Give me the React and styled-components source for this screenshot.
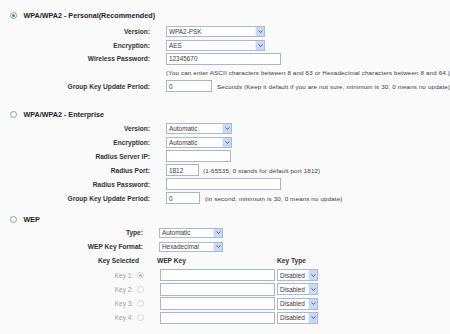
import React from 'react';
import styled, { createGlobalStyle } from 'styled-components';

const GlobalStyle = createGlobalStyle`
  html, body {
    margin: 0;
    padding: 0;
    background: #fafafa;
  }
  body {
    font-family: "Liberation Sans", Arial, sans-serif;
  }
`;

const Page = styled.div`
  width: 450px;
  height: 334px;
  overflow: hidden;
  box-sizing: border-box;
  padding: 8px 0 0 10px;
  color: #333;
`;

const Section = styled.div`
  margin-top: ${({ $top }) => $top || 0}px;
`;

const Title = styled.div`
  display: flex;
  align-items: center;
  gap: 6.5px;
  height: ${({ $h }) => $h || 14}px;
  font-size: 7.2px;
  font-weight: bold;
  color: #222;
  white-space: nowrap;
`;

const Radio = styled.span`
  width: 7px;
  height: 7px;
  box-sizing: border-box;
  border-radius: 50%;
  border: 1px solid ${({ $disabled }) => ($disabled ? '#cdd3db' : '#8d9db3')};
  background: #fff;
  display: inline-flex;
  align-items: center;
  justify-content: center;
  flex-shrink: 0;

  &::after {
    content: '';
    width: 3px;
    height: 3px;
    border-radius: 50%;
    background: ${({ $disabled }) => ($disabled ? '#b8b8b8' : '#3f9a55')};
    display: ${({ $checked }) => ($checked ? 'block' : 'none')};
  }
`;

const Rows = styled.div`
  margin-top: ${({ $top }) => $top || 0}px;
`;

const Row = styled.div`
  display: flex;
  align-items: center;
  height: ${({ $h }) => $h || 14}px;
`;

const Label = styled.div`
  width: ${({ $w }) => $w}px;
  flex-shrink: 0;
  box-sizing: border-box;
  padding-right: ${({ $pad }) => $pad || 0}px;
  margin-right: ${({ $gap }) => ($gap === undefined ? 16 : $gap)}px;
  text-align: right;
  font-size: 6.6px;
  font-weight: bold;
  color: #333;
  white-space: nowrap;
`;

const KeyLabel = styled.div`
  width: ${({ $w }) => $w}px;
  flex-shrink: 0;
  margin-right: 16px;
  display: flex;
  align-items: center;
  justify-content: flex-end;
  gap: 4px;
  font-size: 6.4px;
  color: #9d9d9d;
  white-space: nowrap;
`;

const HeadCell = styled.div`
  width: ${({ $w }) => ($w ? `${$w}px` : 'auto')};
  flex-shrink: 0;
  font-size: 6.6px;
  font-weight: bold;
  color: #333;
  white-space: nowrap;
`;

const Field = styled.div`
  display: flex;
  align-items: center;
  gap: ${({ $gap }) => $gap || 4}px;
`;

const Hint = styled.span`
  font-size: 6.2px;
  letter-spacing: 0.16px;
  color: #3c3844;
  white-space: nowrap;
`;

const SelectBox = styled.div`
  display: flex;
  width: ${({ $w }) => $w}px;
  height: ${({ $h }) => $h || 11}px;
  box-sizing: border-box;
  border: 1px solid #a9bad6;
  background: #fff;
`;

const NativeSelect = styled.select`
  appearance: none;
  -webkit-appearance: none;
  border: none;
  outline: none;
  background: transparent;
  flex: 1;
  min-width: 0;
  height: 100%;
  margin: 0;
  padding: 0 0 0 2px;
  font: 6.4px "Liberation Sans", Arial, sans-serif;
  color: #3a3a3a;
`;

const ArrowBox = styled.span`
  width: 8px;
  flex-shrink: 0;
  background: #cad8f6;
  border-left: 1px solid #e6edfb;
  display: flex;
  align-items: center;
  justify-content: center;
`;

const TextInput = styled.input`
  width: ${({ $w }) => $w}px;
  height: ${({ $h }) => $h || 12}px;
  box-sizing: border-box;
  margin: 0;
  padding: 0 0 0 2px;
  border: 1px solid #aab6c6;
  background: #fff;
  outline: none;
  font: 6.4px "Liberation Sans", Arial, sans-serif;
  color: #3a3a3a;
`;

const Select = ({ w, h, value, options }) => (
  <SelectBox $w={w} $h={h}>
    <NativeSelect defaultValue={value}>
      {(options || [value]).map((o) => (
        <option key={o}>{o}</option>
      ))}
    </NativeSelect>
    <ArrowBox>
      <svg width="5" height="3" viewBox="0 0 5 3">
        <polyline points="0.5,0.5 2.5,2.4 4.5,0.5" fill="none" stroke="#4b5f86" strokeWidth="1" />
      </svg>
    </ArrowBox>
  </SelectBox>
);

const App = () => (
  <Page>
    <GlobalStyle />

    <Section>
      <Title>
        <Radio $checked />
        WPA/WPA2 - Personal(Recommended)
      </Title>
      <Rows $top={2.5}>
        <Row $h={13.75}>
          <Label $w={140}>Version:</Label>
          <Select w={99} value="WPA2-PSK" options={['Automatic', 'WPA-PSK', 'WPA2-PSK']} />
        </Row>
        <Row $h={13.75}>
          <Label $w={140}>Encryption:</Label>
          <Select w={99} value="AES" options={['Automatic', 'TKIP', 'AES']} />
        </Row>
        <Row $h={13.75}>
          <Label $w={140}>Wireless Password:</Label>
          <TextInput $w={115} defaultValue="12345670" />
        </Row>
        <Row $h={13.75}>
          <Label $w={140} />
          <Hint>(You can enter ASCII characters between 8 and 63 or Hexadecimal characters between 8 and 64.)</Hint>
        </Row>
        <Row $h={13.75}>
          <Label $w={140}>Group Key Update Period:</Label>
          <Field $gap={5}>
            <TextInput $w={46} defaultValue="0" />
            <Hint>Seconds (Keep it default if you are not sure, minimum is 30, 0 means no update)</Hint>
          </Field>
        </Row>
      </Rows>
    </Section>

    <Section $top={13.75}>
      <Title>
        <Radio />
        WPA/WPA2 - Enterprise
      </Title>
      <Rows>
        <Row>
          <Label $w={140}>Version:</Label>
          <Select w={66} value="Automatic" options={['Automatic', 'WPA', 'WPA2']} />
        </Row>
        <Row>
          <Label $w={140}>Encryption:</Label>
          <Select w={66} value="Automatic" options={['Automatic', 'TKIP', 'AES']} />
        </Row>
        <Row>
          <Label $w={140}>Radius Server IP:</Label>
          <TextInput $w={65} defaultValue="" />
        </Row>
        <Row>
          <Label $w={140}>Radius Port:</Label>
          <Field>
            <TextInput $w={33} defaultValue="1812" />
            <Hint>(1-65535, 0 stands for default port 1812)</Hint>
          </Field>
        </Row>
        <Row>
          <Label $w={140}>Radius Password:</Label>
          <TextInput $w={115} defaultValue="" />
        </Row>
        <Row>
          <Label $w={140}>Group Key Update Period:</Label>
          <Field $gap={5}>
            <TextInput $w={34} defaultValue="0" />
            <Hint>(in second, minimum is 30, 0 means no update)</Hint>
          </Field>
        </Row>
      </Rows>
    </Section>

    <Section $top={8.5}>
      <Title $h={12}>
        <Radio />
        WEP
      </Title>
      <Rows>
        <Row>
          <Label $w={133}>Type:</Label>
          <Select w={64} h={10} value="Automatic" options={['Automatic', 'Open System', 'Shared Key']} />
        </Row>
        <Row>
          <Label $w={133}>WEP Key Format:</Label>
          <Select w={64} h={10} value="Hexadecimal" options={['Hexadecimal', 'ASCII']} />
        </Row>
        <Row $h={14.5}>
          <Label $w={134} $pad={5} $gap={13}>Key Selected</Label>
          <HeadCell $w={120}>WEP Key</HeadCell>
          <HeadCell>Key Type</HeadCell>
        </Row>
        {[1, 2, 3, 4].map((n) => (
          <Row key={n} $h={14.25}>
            <KeyLabel $w={134}>
              Key {n}:
              <Radio $disabled $checked={n === 1} />
            </KeyLabel>
            <Field $gap={2}>
              <TextInput $w={115} $h={12.5} defaultValue="" />
              <Select w={41} h={12} value="Disabled" options={['Disabled', '64bit', '128bit', '152bit']} />
            </Field>
          </Row>
        ))}
      </Rows>
    </Section>
  </Page>
);

export default App;
